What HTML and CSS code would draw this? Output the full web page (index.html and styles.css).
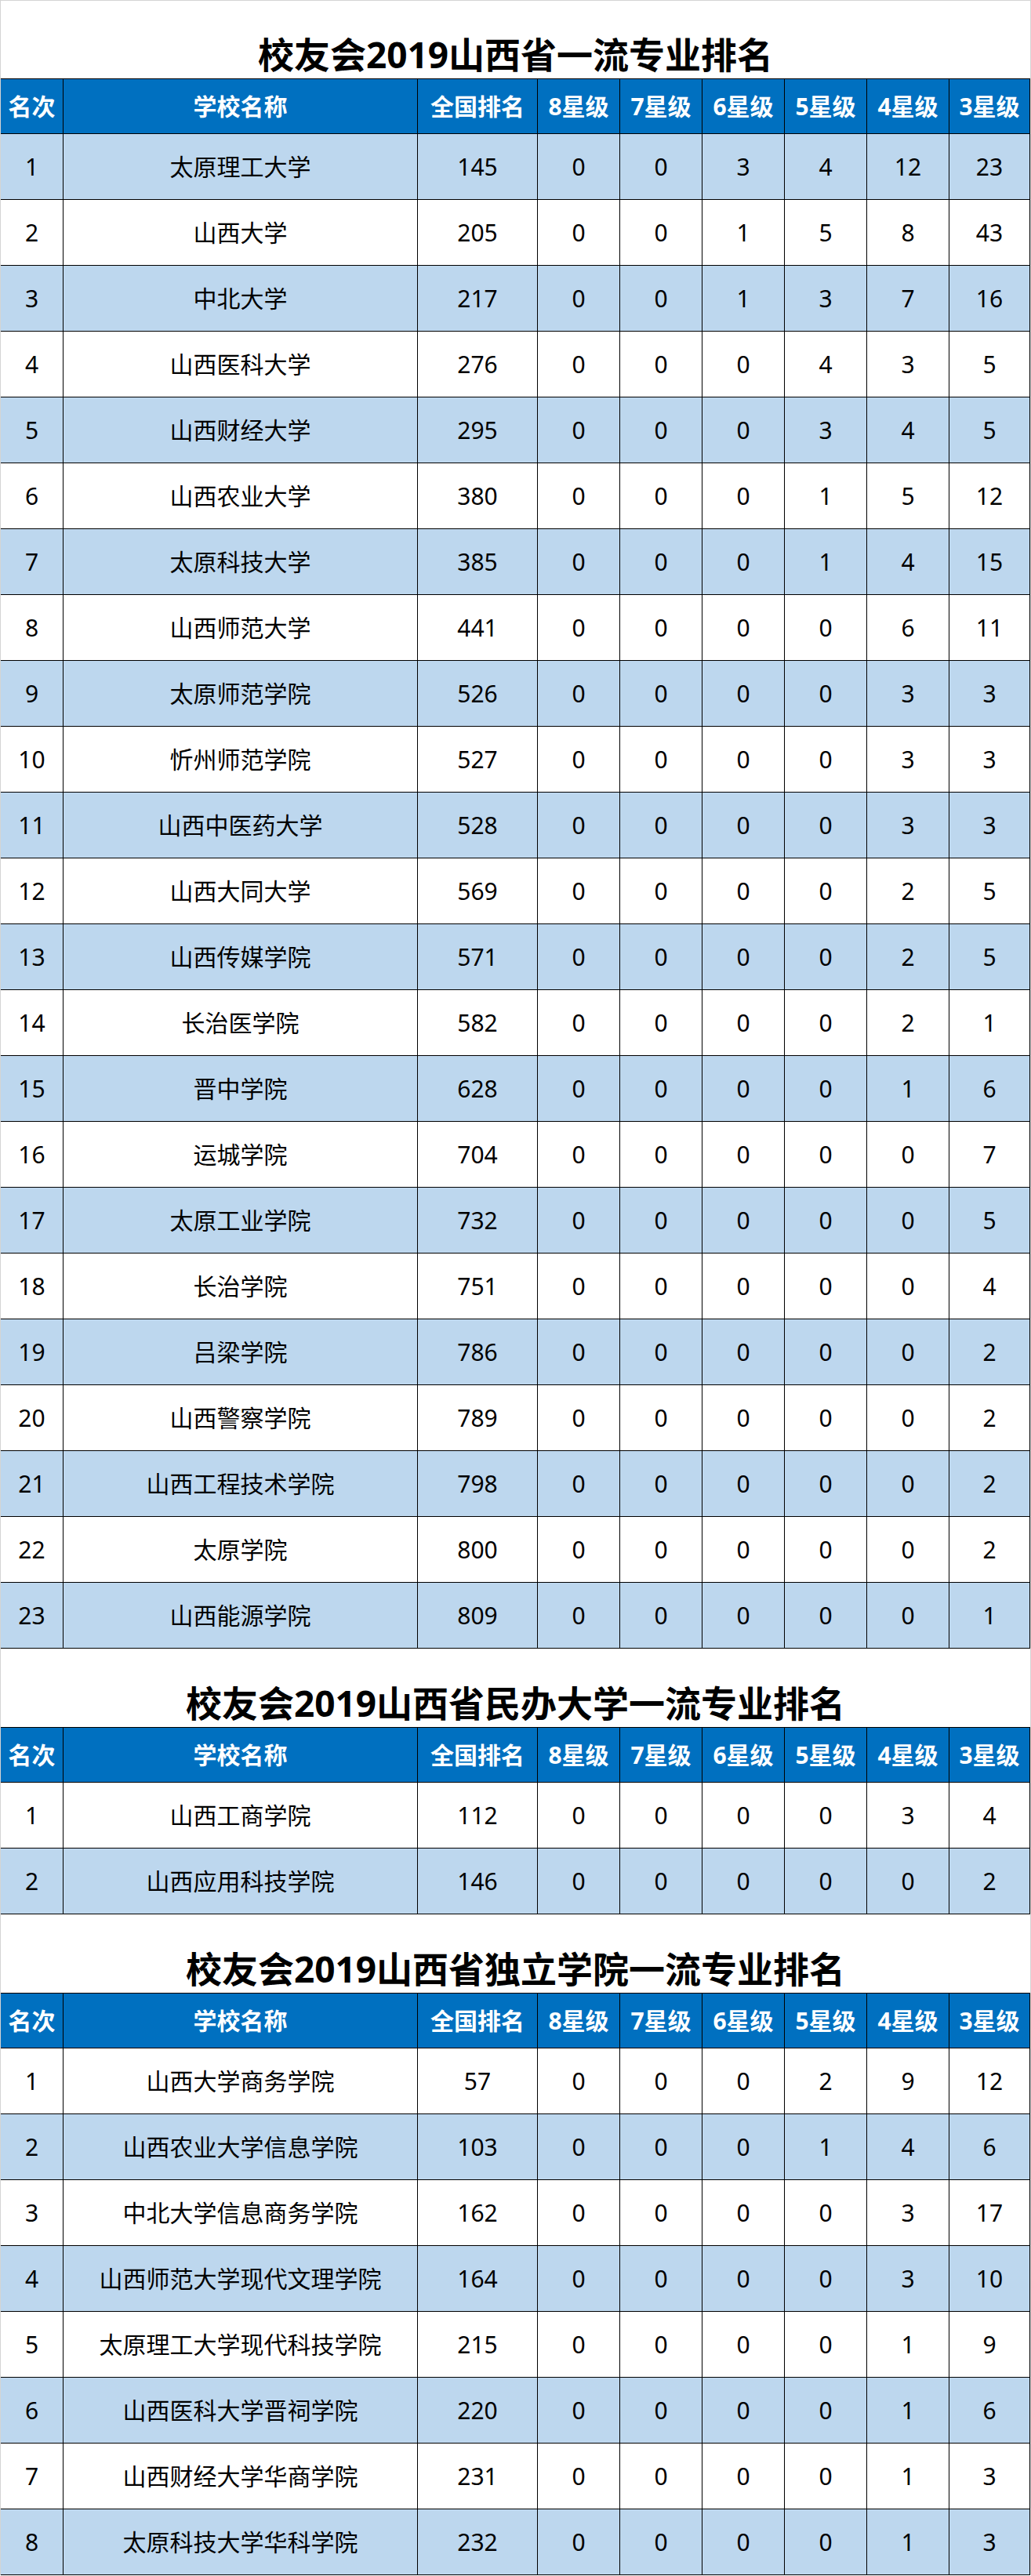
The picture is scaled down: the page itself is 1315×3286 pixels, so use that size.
FILE: index.html
```html
<!DOCTYPE html>
<html lang="zh-CN">
<head>
<meta charset="utf-8">
<title>校友会2019山西省一流专业排名</title>
<link rel="stylesheet" href="styles.css">
</head>
<body>
<div class="page">
  <section class="block">
    <h1 class="title">校友会2019山西省一流专业排名</h1>
    <div class="row head"><span>名次</span><span>学校名称</span><span>全国排名</span><span>8星级</span><span>7星级</span><span>6星级</span><span>5星级</span><span>4星级</span><span>3星级</span></div>
    <div class="row alt"><span>1</span><span>太原理工大学</span><span>145</span><span>0</span><span>0</span><span>3</span><span>4</span><span>12</span><span>23</span></div>
    <div class="row"><span>2</span><span>山西大学</span><span>205</span><span>0</span><span>0</span><span>1</span><span>5</span><span>8</span><span>43</span></div>
    <div class="row alt"><span>3</span><span>中北大学</span><span>217</span><span>0</span><span>0</span><span>1</span><span>3</span><span>7</span><span>16</span></div>
    <div class="row"><span>4</span><span>山西医科大学</span><span>276</span><span>0</span><span>0</span><span>0</span><span>4</span><span>3</span><span>5</span></div>
    <div class="row alt"><span>5</span><span>山西财经大学</span><span>295</span><span>0</span><span>0</span><span>0</span><span>3</span><span>4</span><span>5</span></div>
    <div class="row"><span>6</span><span>山西农业大学</span><span>380</span><span>0</span><span>0</span><span>0</span><span>1</span><span>5</span><span>12</span></div>
    <div class="row alt"><span>7</span><span>太原科技大学</span><span>385</span><span>0</span><span>0</span><span>0</span><span>1</span><span>4</span><span>15</span></div>
    <div class="row"><span>8</span><span>山西师范大学</span><span>441</span><span>0</span><span>0</span><span>0</span><span>0</span><span>6</span><span>11</span></div>
    <div class="row alt"><span>9</span><span>太原师范学院</span><span>526</span><span>0</span><span>0</span><span>0</span><span>0</span><span>3</span><span>3</span></div>
    <div class="row"><span>10</span><span>忻州师范学院</span><span>527</span><span>0</span><span>0</span><span>0</span><span>0</span><span>3</span><span>3</span></div>
    <div class="row alt"><span>11</span><span>山西中医药大学</span><span>528</span><span>0</span><span>0</span><span>0</span><span>0</span><span>3</span><span>3</span></div>
    <div class="row"><span>12</span><span>山西大同大学</span><span>569</span><span>0</span><span>0</span><span>0</span><span>0</span><span>2</span><span>5</span></div>
    <div class="row alt"><span>13</span><span>山西传媒学院</span><span>571</span><span>0</span><span>0</span><span>0</span><span>0</span><span>2</span><span>5</span></div>
    <div class="row"><span>14</span><span>长治医学院</span><span>582</span><span>0</span><span>0</span><span>0</span><span>0</span><span>2</span><span>1</span></div>
    <div class="row alt"><span>15</span><span>晋中学院</span><span>628</span><span>0</span><span>0</span><span>0</span><span>0</span><span>1</span><span>6</span></div>
    <div class="row"><span>16</span><span>运城学院</span><span>704</span><span>0</span><span>0</span><span>0</span><span>0</span><span>0</span><span>7</span></div>
    <div class="row alt"><span>17</span><span>太原工业学院</span><span>732</span><span>0</span><span>0</span><span>0</span><span>0</span><span>0</span><span>5</span></div>
    <div class="row"><span>18</span><span>长治学院</span><span>751</span><span>0</span><span>0</span><span>0</span><span>0</span><span>0</span><span>4</span></div>
    <div class="row alt"><span>19</span><span>吕梁学院</span><span>786</span><span>0</span><span>0</span><span>0</span><span>0</span><span>0</span><span>2</span></div>
    <div class="row"><span>20</span><span>山西警察学院</span><span>789</span><span>0</span><span>0</span><span>0</span><span>0</span><span>0</span><span>2</span></div>
    <div class="row alt"><span>21</span><span>山西工程技术学院</span><span>798</span><span>0</span><span>0</span><span>0</span><span>0</span><span>0</span><span>2</span></div>
    <div class="row"><span>22</span><span>太原学院</span><span>800</span><span>0</span><span>0</span><span>0</span><span>0</span><span>0</span><span>2</span></div>
    <div class="row alt"><span>23</span><span>山西能源学院</span><span>809</span><span>0</span><span>0</span><span>0</span><span>0</span><span>0</span><span>1</span></div>
  </section>
  <section class="block">
    <h1 class="title">校友会2019山西省民办大学一流专业排名</h1>
    <div class="row head"><span>名次</span><span>学校名称</span><span>全国排名</span><span>8星级</span><span>7星级</span><span>6星级</span><span>5星级</span><span>4星级</span><span>3星级</span></div>
    <div class="row"><span>1</span><span>山西工商学院</span><span>112</span><span>0</span><span>0</span><span>0</span><span>0</span><span>3</span><span>4</span></div>
    <div class="row alt"><span>2</span><span>山西应用科技学院</span><span>146</span><span>0</span><span>0</span><span>0</span><span>0</span><span>0</span><span>2</span></div>
  </section>
  <section class="block">
    <h1 class="title">校友会2019山西省独立学院一流专业排名</h1>
    <div class="row head"><span>名次</span><span>学校名称</span><span>全国排名</span><span>8星级</span><span>7星级</span><span>6星级</span><span>5星级</span><span>4星级</span><span>3星级</span></div>
    <div class="row"><span>1</span><span>山西大学商务学院</span><span>57</span><span>0</span><span>0</span><span>0</span><span>2</span><span>9</span><span>12</span></div>
    <div class="row alt"><span>2</span><span>山西农业大学信息学院</span><span>103</span><span>0</span><span>0</span><span>0</span><span>1</span><span>4</span><span>6</span></div>
    <div class="row"><span>3</span><span>中北大学信息商务学院</span><span>162</span><span>0</span><span>0</span><span>0</span><span>0</span><span>3</span><span>17</span></div>
    <div class="row alt"><span>4</span><span>山西师范大学现代文理学院</span><span>164</span><span>0</span><span>0</span><span>0</span><span>0</span><span>3</span><span>10</span></div>
    <div class="row"><span>5</span><span>太原理工大学现代科技学院</span><span>215</span><span>0</span><span>0</span><span>0</span><span>0</span><span>1</span><span>9</span></div>
    <div class="row alt"><span>6</span><span>山西医科大学晋祠学院</span><span>220</span><span>0</span><span>0</span><span>0</span><span>0</span><span>1</span><span>6</span></div>
    <div class="row"><span>7</span><span>山西财经大学华商学院</span><span>231</span><span>0</span><span>0</span><span>0</span><span>0</span><span>1</span><span>3</span></div>
    <div class="row alt"><span>8</span><span>太原科技大学华科学院</span><span>232</span><span>0</span><span>0</span><span>0</span><span>0</span><span>1</span><span>3</span></div>
  </section>
</div>
</body>
</html>
```

FILE: styles.css
```css
* {
  box-sizing: border-box;
  margin: 0;
  padding: 0;
}

html, body {
  background: #ffffff;
}

body {
  margin: 0;
  font-family: "Noto Sans", "Noto Sans CJK SC", sans-serif;
  color: #000000;
}

.page {
  width: 1315px;
  border-top: 1px solid #d4d4d4;
  border-left: 1px solid #d4d4d4;
  border-right: 1px solid #d4d4d4;
}

.title {
  height: 100px;
  display: flex;
  align-items: flex-end;
  justify-content: center;
  padding-bottom: 8px;
  font-size: 46px;
  line-height: 46px;
  font-weight: 700;
  color: #000000;
  white-space: nowrap;
}

.block:first-child .title {
  height: 99px;
}

.row {
  display: grid;
  grid-template-columns: 80px 452px 153px 105px 105px 105px 105px 105px 103px;
  height: 84px;
  background: #ffffff;
}

.row > span {
  display: flex;
  align-items: center;
  justify-content: center;
  border-right: 1px solid #000000;
  border-bottom: 1px solid #000000;
  font-size: 30px;
  line-height: 1;
  white-space: nowrap;
}

.row.alt {
  background: #bdd7ee;
}

.row.head {
  height: 71px;
  border-top: 1px solid #000000;
  background: #0070c0;
  color: #ffffff;
  font-weight: 700;
}

.row.head > span {
  font-size: 30px;
}
```
